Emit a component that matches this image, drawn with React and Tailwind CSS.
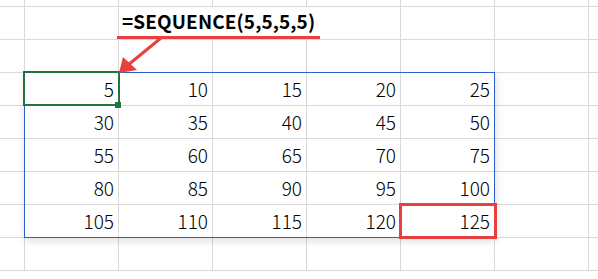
import React from "react";

const font = { fontFamily: '"Noto Sans CJK JP", "Liberation Sans", sans-serif' };

const DATA = [
  [5, 10, 15, 20, 25],
  [30, 35, 40, 45, 50],
  [55, 60, 65, 70, 75],
  [80, 85, 90, 95, 100],
  [105, 110, 115, 120, 125],
];

const Cell = ({ children, className = "" }) => (
  <div className={`w-[94px] shrink-0 border-r border-[#d9d9d9] flex items-center justify-end pr-[4px] pt-[1px] ${className}`}>
    {children}
  </div>
);

const Row = ({ values = [], h = "h-[33px]" }) => (
  <div className={`flex ${h} border-b border-[#d9d9d9]`}>
    <div className="w-[25px] shrink-0 border-r border-[#d9d9d9]" />
    {[0, 1, 2, 3, 4, 5].map((i) => (
      <Cell key={i}>{values[i]}</Cell>
    ))}
    <div className="flex-1" />
  </div>
);

const App = () => {
  return (
    <div className="relative w-[598px] h-[279px] overflow-hidden bg-white text-black text-[19px] font-light" style={font}>
      <Row h="h-[7px]" />
      {/* formula row, text overflows across three cells */}
      <div className="flex h-[33px] border-b border-[#d9d9d9]">
        <div className="w-[25px] shrink-0 border-r border-[#d9d9d9]" />
        <div className="w-[94px] shrink-0 border-r border-[#d9d9d9]" />
        <div className="w-[282px] shrink-0 border-r border-[#d9d9d9] flex items-center pl-[3px] pb-[3px] whitespace-nowrap">
          <span className="text-[19px] font-bold tracking-[0.1px]">=SEQUENCE(5,5,5,5)</span>
        </div>
        <div className="w-[94px] shrink-0 border-r border-[#d9d9d9]" />
        <div className="w-[94px] shrink-0 border-r border-[#d9d9d9]" />
        <div className="flex-1" />
      </div>
      <Row />
      {DATA.map((r, i) => (
        <Row key={i} values={r} />
      ))}
      <Row />

      {/* selection range */}
      <div className="absolute left-[24px] top-[72px] w-[471px] h-[166px] border border-[#2b5fce] shadow-[1px_3px_8px_rgba(0,0,0,0.13)]" />
      {/* active cell */}
      <div className="absolute left-[23px] top-[71px] w-[97px] h-[35px] border-2 border-[#217346]" />
      <div className="absolute left-[115px] top-[102px] w-[6px] h-[6px] bg-[#217346]" />
      {/* annotations */}
      <div className="absolute left-[117px] top-[36px] w-[203px] h-[3px] bg-[#e8403f]" />
      <svg className="absolute left-0 top-0" width="598" height="279" viewBox="0 0 598 279">
        <line x1="161" y1="38" x2="128" y2="65" stroke="#e8403f" strokeWidth="3" />
        <polygon points="119,73 123,57 137,70" fill="#e8403f" />
      </svg>
      <div className="absolute left-[399px] top-[203px] w-[98px] h-[36px] border-[3px] border-[#e8403f]" />
    </div>
  );
};

export default App;
